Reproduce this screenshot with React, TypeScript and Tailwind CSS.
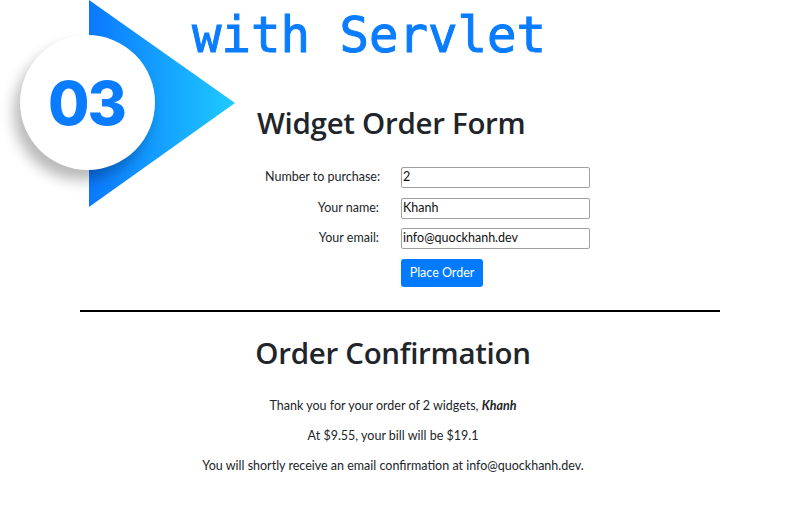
import React from "react";

const sans = { fontFamily: 'Lato, "Open Sans", sans-serif' };

function Badge() {
  return (
    <>
      <svg
        className="absolute left-[89px] top-0"
        width="148"
        height="208"
        viewBox="0 0 148 208"
      >
        <defs>
          <linearGradient id="tri" x1="0" y1="0" x2="1" y2="0">
            <stop offset="0" stopColor="#0a78ff" />
            <stop offset="1" stopColor="#1fcaff" />
          </linearGradient>
        </defs>
        <polygon points="0,0 146,103 0,207" fill="url(#tri)" />
      </svg>
      <div className="absolute left-[20px] top-[35px] flex h-[135px] w-[135px] items-center justify-center rounded-full bg-white shadow-[-6px_10px_14px_rgba(0,0,0,0.28)]">
        <span
          className="mr-[2px] text-[60px] font-extrabold leading-none tracking-[-2px] text-[#0a7cff]"
          style={{ fontFamily: "Inter, sans-serif" }}
        >
          03
        </span>
      </div>
    </>
  );
}

function Row({ label, value }: { label: string; value: string }) {
  return (
    <div className="flex items-center">
      <label className="w-[114px] whitespace-nowrap text-right text-[12.5px] text-[#212529]">{label}</label>
      <div className="ml-[22px] flex h-[21px] w-[189px] items-center rounded-[2px] border border-[#a0a0a0] px-[1px] text-[12.5px] text-[#111]">
        {value}
      </div>
    </div>
  );
}

export default function App() {
  return (
    <div className="relative h-[522px] w-[800px] overflow-hidden bg-white" style={sans}>
      <Badge />
      <div className="relative flex flex-col">
        <div
          className="pl-[192px] pt-[8px] text-[49px] leading-[56px] text-[#0a7cff] [-webkit-text-stroke:1px_#0a7cff]"
          style={{ fontFamily: '"DejaVu Sans Mono", monospace' }}
        >
          with Servlet
        </div>
        <h1
          className="mt-[39px] pl-[257px] text-[29.5px] font-semibold leading-[40px] tracking-[-0.3px] text-[#212529]"
          style={{ fontFamily: '"Open Sans", sans-serif' }}
        >
          Widget Order Form
        </h1>
        <div className="mt-[24px] flex flex-col gap-[9.5px] pl-[265px]">
          <Row label="Number to purchase:" value="2" />
          <Row label="Your name:" value="Khanh" />
          <Row label="Your email:" value="info@quockhanh.dev" />
          <div className="pl-[136px]">
            <button className="h-[28px] w-[82px] rounded-[3px] bg-[#007bff] text-[12.5px] text-white">
              Place Order
            </button>
          </div>
        </div>
        <div className="mx-[80px] mt-[23px] h-[2px] bg-black" />
        <h2
          className="mt-[21px] pr-[14px] text-center text-[29.5px] font-semibold leading-[40px] tracking-[-0.3px] text-[#212529]"
          style={{ fontFamily: '"Open Sans", sans-serif' }}
        >
          Order Confirmation
        </h2>
        <div className="mt-[24px] flex flex-col gap-[12px] pr-[14px] text-center text-[12.5px] leading-[18px] text-[#212529]">
          <p>
            Thank you for your order of 2 widgets, <b><i>Khanh</i></b>
          </p>
          <p>At $9.55, your bill will be $19.1</p>
          <p>You will shortly receive an email confirmation at info@quockhanh.dev.</p>
        </div>
      </div>
    </div>
  );
}
